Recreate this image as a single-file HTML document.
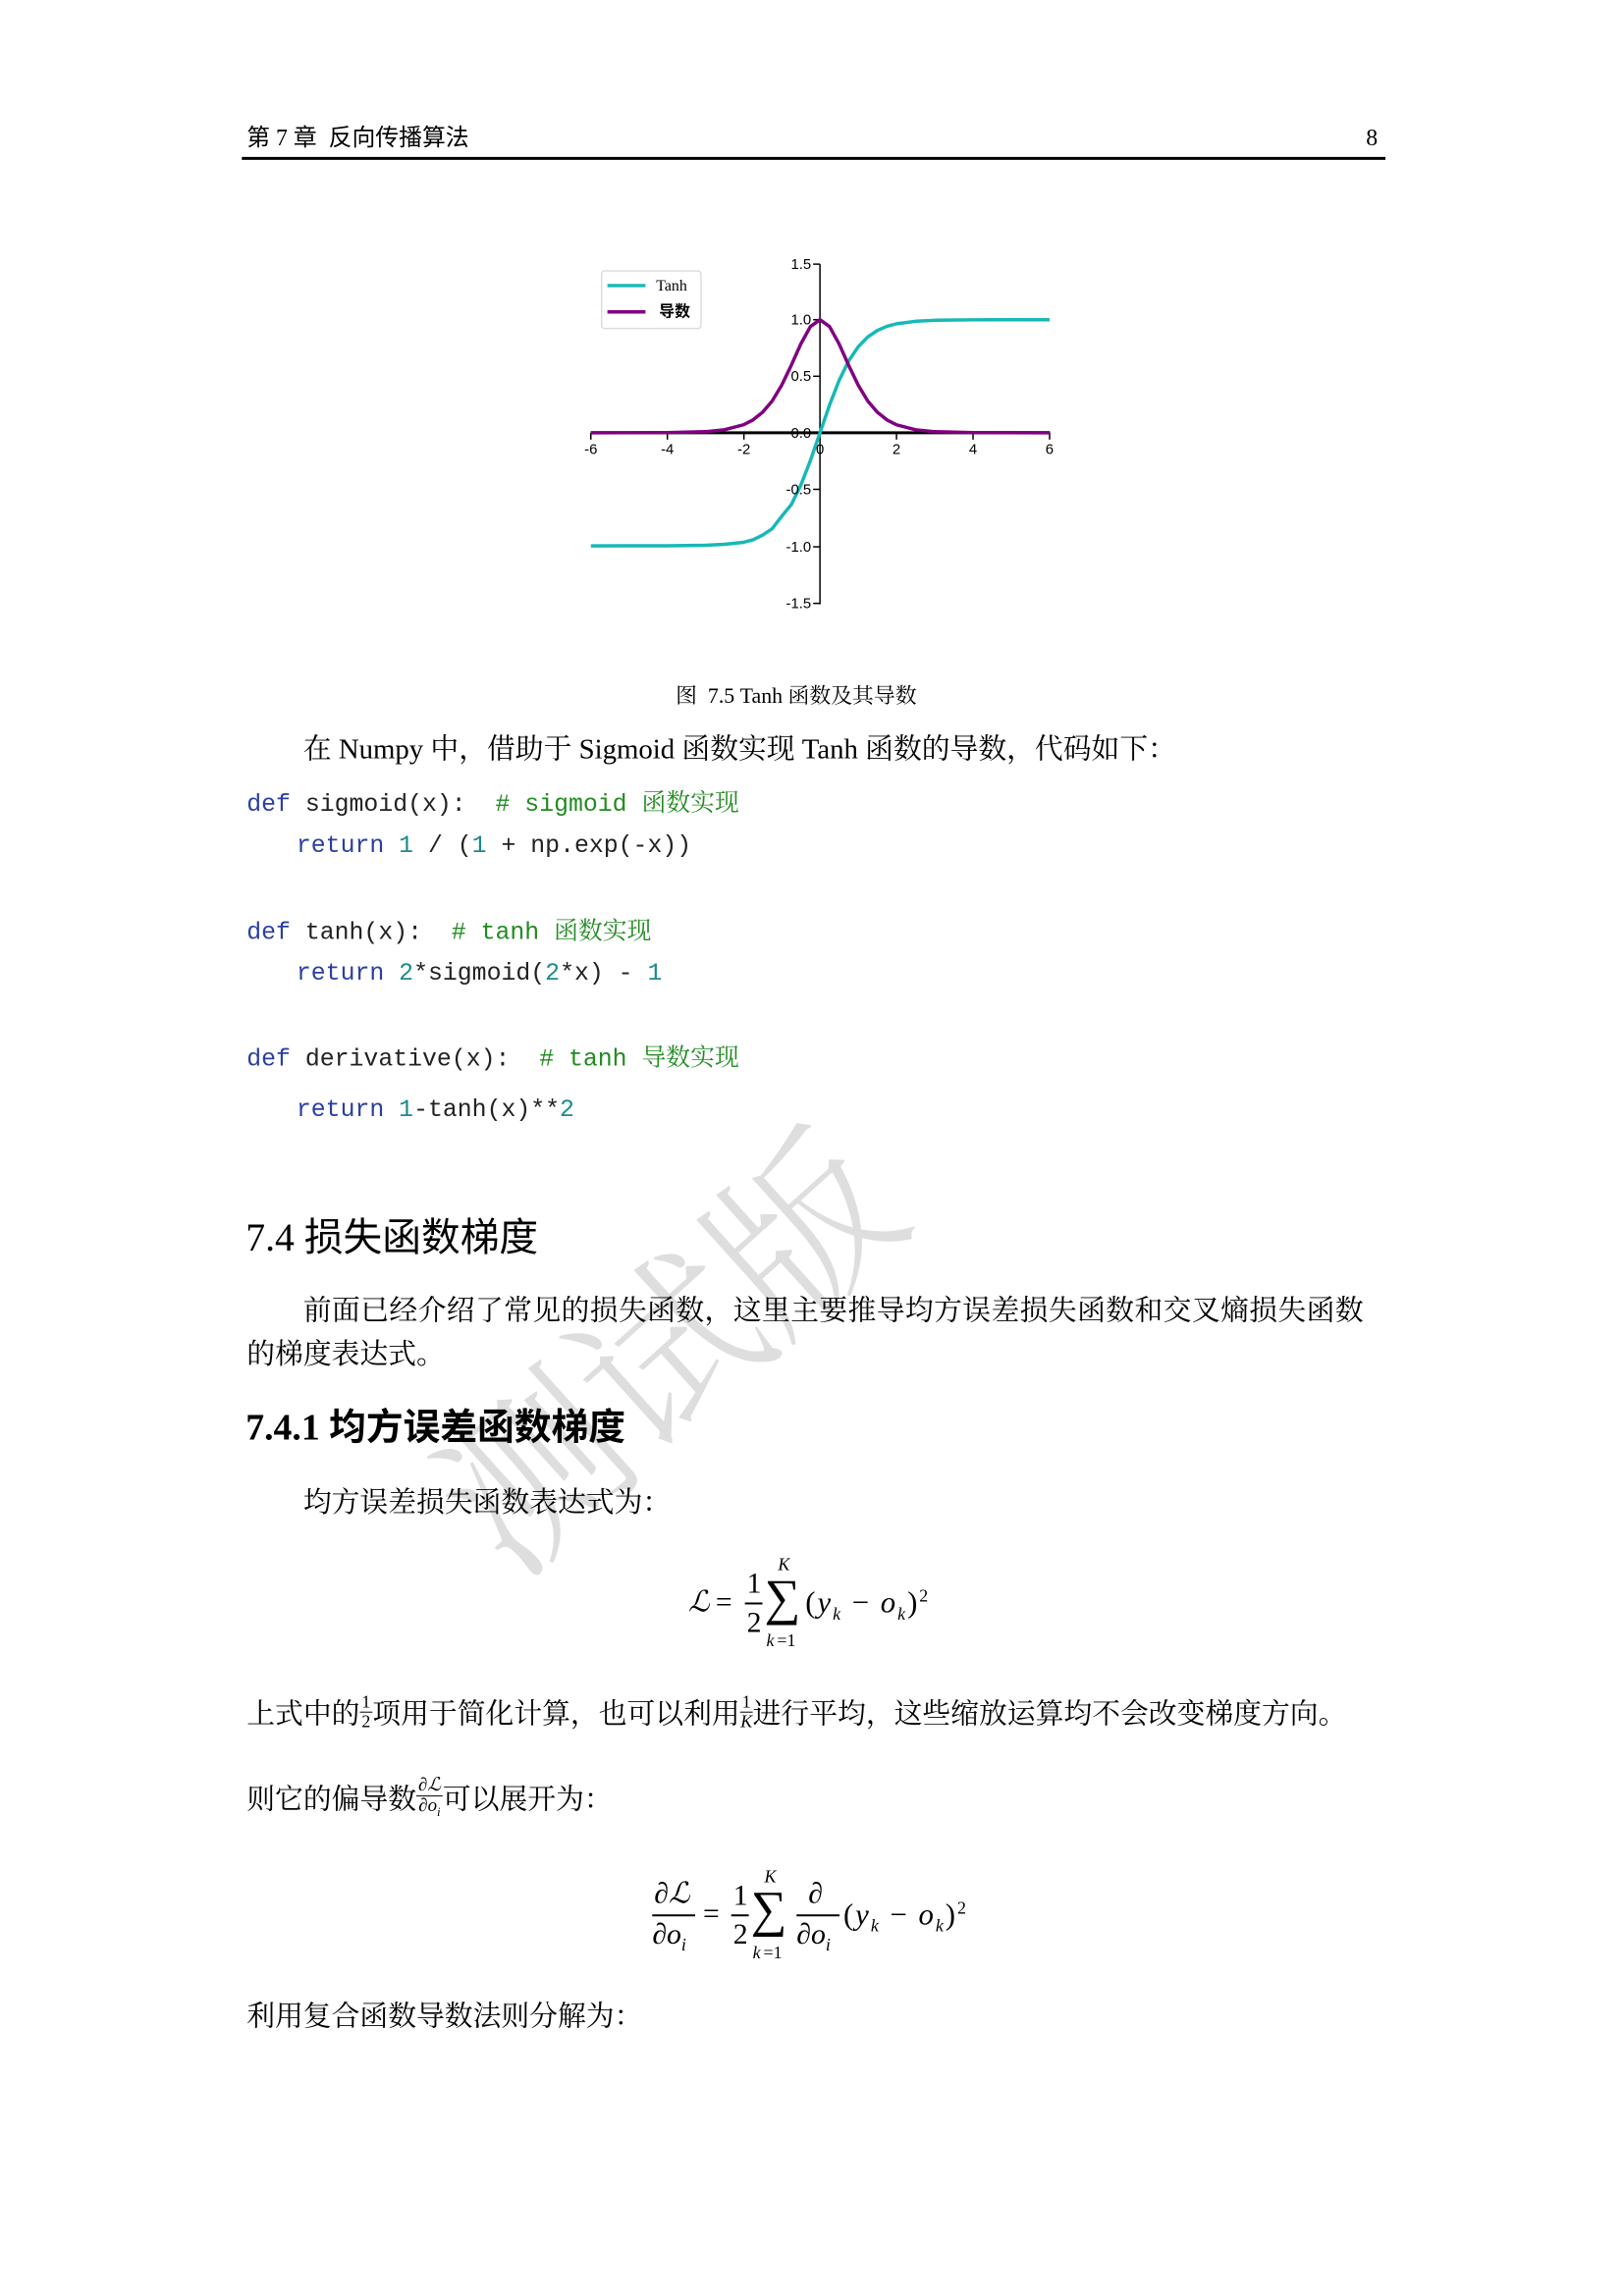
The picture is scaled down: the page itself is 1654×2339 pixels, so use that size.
<!DOCTYPE html>
<html><head><meta charset="utf-8"><style>
html,body{margin:0;padding:0;background:#fff;}
body{width:1654px;height:2339px;position:relative;overflow:hidden;font-family:"Liberation Serif","Noto Serif CJK SC",serif;color:#000;}
#w{position:absolute;left:0;top:0;width:1654px;height:2339px;transform:scale(0.993);transform-origin:0 0;}
.a{position:absolute;white-space:nowrap;line-height:1;}
.t{font-size:29px;font-family:"Liberation Serif","Noto Serif CJK SC",serif;}
.code{font-family:"Liberation Mono","Noto Serif CJK SC",monospace;font-size:25px;color:#222;}
.kw{color:#2b3fa0}.n{color:#1d8a8a}.c{color:#228b22}
.m{font-family:"Liberation Serif",serif;font-style:italic;}
.frac{display:inline-block;vertical-align:middle;text-align:center;}
.frac span{display:block;line-height:1.05;}
.frac .num{border-bottom:2px solid #000;padding:0 2px;}
.pr{letter-spacing:2px;font-size:31px;}
.wm{position:absolute;left:400px;top:1285px;font-family:"Noto Serif CJK SC",serif;font-size:185px;color:#dedede;transform:rotate(-42deg);transform-origin:center;white-space:nowrap;line-height:1;font-weight:300;}
</style></head><body><div id="w">

<div class="wm">测试版</div>

<div class="a" style="left:253px;top:130px;font-size:24px;font-family:'Liberation Serif','Noto Sans CJK SC',serif;">第 7 章&nbsp;&nbsp;反向传播算法</div>
<div class="a" style="left:1401px;top:130px;font-size:24px;">8</div>
<div style="position:absolute;left:248px;top:161px;width:1173px;height:3px;background:#000;"></div>

<svg style="position:absolute;left:0;top:0" width="1654" height="700" font-family="Liberation Sans Narrow, Liberation Sans, sans-serif">
<g stroke="#000" stroke-width="1.5">
<line x1="841" y1="271" x2="841" y2="620"/>
<line x1="834" y1="271" x2="841" y2="271"/><line x1="834" y1="328" x2="841" y2="328"/><line x1="834" y1="386" x2="841" y2="386"/><line x1="834" y1="502" x2="841" y2="502"/><line x1="834" y1="561" x2="841" y2="561"/><line x1="834" y1="619" x2="841" y2="619"/>
<line x1="606" y1="444" x2="606" y2="451"/><line x1="684.5" y1="444" x2="684.5" y2="451"/><line x1="763" y1="444" x2="763" y2="451"/><line x1="919.5" y1="444" x2="919.5" y2="451"/><line x1="998" y1="444" x2="998" y2="451"/><line x1="1076.5" y1="444" x2="1076.5" y2="451"/>
</g>
<line x1="606" y1="444" x2="1077" y2="444" stroke="#000" stroke-width="3"/>
<polyline fill="none" stroke="#17b8b8" stroke-width="3.5" stroke-linejoin="round" points="606,560 684,559.9 723.2,559.4 743,558.4 762.5,556.4 772.3,553.8 782.1,549 791.9,542.5 801.8,529.6 811.6,517.7 821.4,497.6 831.2,472.4 841,444 850.8,415.6 860.6,390.4 870.4,370.3 880.3,355.7 890.1,345.6 899.9,339 909.7,334.8 919.5,332.2 939.1,329.6 958.8,328.6 998,328.1 1076.5,328"/>
<polyline fill="none" stroke="#800080" stroke-width="3.5" stroke-linejoin="round" points="606,444 684,443.8 723.2,442.9 742.9,440.9 762.5,435.8 772.3,430.8 782.1,423 791.9,411.5 801.7,395.3 811.6,374.7 821.4,352.8 831.2,335 841,328 850.8,335 860.6,352.8 870.4,374.7 880.3,395.3 890.1,411.5 899.9,423 909.7,430.8 919.5,435.8 939.1,440.9 958.8,442.9 998,443.8 1076.5,444"/>
<g font-size="15" text-anchor="middle">
<text x="606" y="466">-6</text><text x="684.5" y="466">-4</text><text x="763" y="466">-2</text><text x="841" y="466">0</text><text x="919.5" y="466">2</text><text x="998" y="466">4</text><text x="1076.5" y="466">6</text>
</g>
<g font-size="15" text-anchor="end">
<text x="832" y="276">1.5</text><text x="832" y="333">1.0</text><text x="832" y="391">0.5</text><text x="832" y="449">0.0</text><text x="832" y="507">-0.5</text><text x="832" y="566">-1.0</text><text x="832" y="624">-1.5</text>
</g>
<rect x="617" y="278" width="102" height="59" rx="3" fill="#fff" stroke="#ddd" stroke-width="1.5"/>
<line x1="623" y1="293" x2="662" y2="293" stroke="#17b8b8" stroke-width="3.5"/>
<line x1="623" y1="320" x2="662" y2="320" stroke="#800080" stroke-width="3.5"/>
<text x="673" y="298" font-size="16" font-family="Liberation Serif, serif">Tanh</text>
<text x="676" y="325" font-size="16" font-family="Noto Sans CJK SC, sans-serif" font-weight="bold">导数</text>
</svg>

<div class="a" style="left:693px;top:703px;font-size:22px;">图&nbsp; 7.5 Tanh 函数及其导数</div>

<div class="a t" style="left:311px;top:755px;">在 Numpy 中，借助于 Sigmoid 函数实现 Tanh 函数的导数，代码如下：</div>

<div class="a code" style="left:253px;top:813px;"><span class="kw">def</span> sigmoid(x):&nbsp; <span class="c"># sigmoid 函数实现</span></div>
<div class="a code" style="left:304px;top:855px;"><span class="kw">return</span> <span class="n">1</span> / (<span class="n">1</span> + np.exp(-x))</div>
<div class="a code" style="left:253px;top:944px;"><span class="kw">def</span> tanh(x):&nbsp; <span class="c"># tanh 函数实现</span></div>
<div class="a code" style="left:304px;top:986px;"><span class="kw">return</span> <span class="n">2</span>*sigmoid(<span class="n">2</span>*x) - <span class="n">1</span></div>
<div class="a code" style="left:253px;top:1074px;"><span class="kw">def</span> derivative(x):&nbsp; <span class="c"># tanh 导数实现</span></div>
<div class="a code" style="left:304px;top:1126px;"><span class="kw">return</span> <span class="n">1</span>-tanh(x)**<span class="n">2</span></div>

<div class="a" style="left:252px;top:1250px;font-size:40px;font-family:'Liberation Serif','Noto Sans CJK SC',serif;">7.4 损失函数梯度</div>

<div class="a t" style="left:311px;top:1331px;letter-spacing:0.4px;">前面已经介绍了常见的损失函数，这里主要推导均方误差损失函数和交叉熵损失函数</div>
<div class="a t" style="left:253px;top:1376px;">的梯度表达式。</div>

<div class="a" style="left:252px;top:1446px;font-size:38px;font-weight:bold;font-family:'Liberation Serif','Noto Sans CJK SC',serif;">7.4.1 均方误差函数梯度</div>

<div class="a t" style="left:311px;top:1528px;">均方误差损失函数表达式为：</div>

<div class="a" style="left:706px;top:1600px;font-size:30px;height:90px;">
 <span class="m" style="position:absolute;left:0;top:29px;">ℒ</span>
 <span style="position:absolute;left:28px;top:29px;">=</span>
 <span style="position:absolute;left:60px;top:10px;">1</span>
 <span style="position:absolute;left:58px;top:44px;width:18px;height:2px;background:#000;"></span>
 <span style="position:absolute;left:60px;top:50px;">2</span>
 <span style="position:absolute;left:78px;top:14px;font-size:52px;">∑</span>
 <span class="m" style="position:absolute;left:92px;top:-4px;font-size:18px;">K</span>
 <span class="m" style="position:absolute;left:80px;top:74px;font-size:18px;">k</span><span style="position:absolute;left:91px;top:74px;font-size:18px;">=1</span>
 <span class="pr" style="position:absolute;left:120px;top:28px;">(<i>y</i><sub style="font-size:18px;font-style:italic;">k</sub> − <i>o</i><sub style="font-size:18px;font-style:italic;">k</sub>)<sup style="font-size:18px;">2</sup></span>
</div>

<div class="a t" style="left:253px;top:1745px;">上式中的<span class="frac" style="font-size:18px;margin-top:-10px;"><span class="num" style="border-width:1.5px">1</span><span>2</span></span>项用于简化计算，也可以利用<span class="frac" style="font-size:18px;margin-top:-10px;"><span class="num" style="border-width:1.5px">1</span><span class="m">K</span></span>进行平均，这些缩放运算均不会改变梯度方向。</div>

<div class="a t" style="left:253px;top:1832px;">则它的偏导数<span class="frac m" style="font-size:19px;margin-top:-10px;"><span class="num" style="border-width:1.5px">∂ℒ</span><span>∂o<sub style="font-size:13px">i</sub></span></span>可以展开为：</div>

<div class="a" style="left:669px;top:1920px;font-size:30px;height:100px;width:360px;">
 <span class="m" style="position:absolute;left:2px;top:8px;">∂ℒ</span>
 <span style="position:absolute;left:0;top:44px;width:44px;height:2px;background:#000;"></span>
 <span class="m" style="position:absolute;left:0px;top:50px;">∂o<sub style="font-size:18px">i</sub></span>
 <span style="position:absolute;left:52px;top:29px;">=</span>
 <span style="position:absolute;left:83px;top:10px;">1</span>
 <span style="position:absolute;left:81px;top:44px;width:18px;height:2px;background:#000;"></span>
 <span style="position:absolute;left:83px;top:50px;">2</span>
 <span style="position:absolute;left:101px;top:14px;font-size:52px;">∑</span>
 <span class="m" style="position:absolute;left:115px;top:-4px;font-size:18px;">K</span>
 <span class="m" style="position:absolute;left:103px;top:74px;font-size:18px;">k</span><span style="position:absolute;left:114px;top:74px;font-size:18px;">=1</span>
 <span class="m" style="position:absolute;left:160px;top:8px;">∂</span>
 <span style="position:absolute;left:148px;top:44px;width:44px;height:2px;background:#000;"></span>
 <span class="m" style="position:absolute;left:148px;top:50px;">∂o<sub style="font-size:18px">i</sub></span>
 <span class="pr" style="position:absolute;left:196px;top:28px;">(<i>y</i><sub style="font-size:18px;font-style:italic;">k</sub> − <i>o</i><sub style="font-size:18px;font-style:italic;">k</sub>)<sup style="font-size:18px;">2</sup></span>
</div>

<div class="a t" style="left:253px;top:2055px;">利用复合函数导数法则分解为：</div>

</div></body></html>
